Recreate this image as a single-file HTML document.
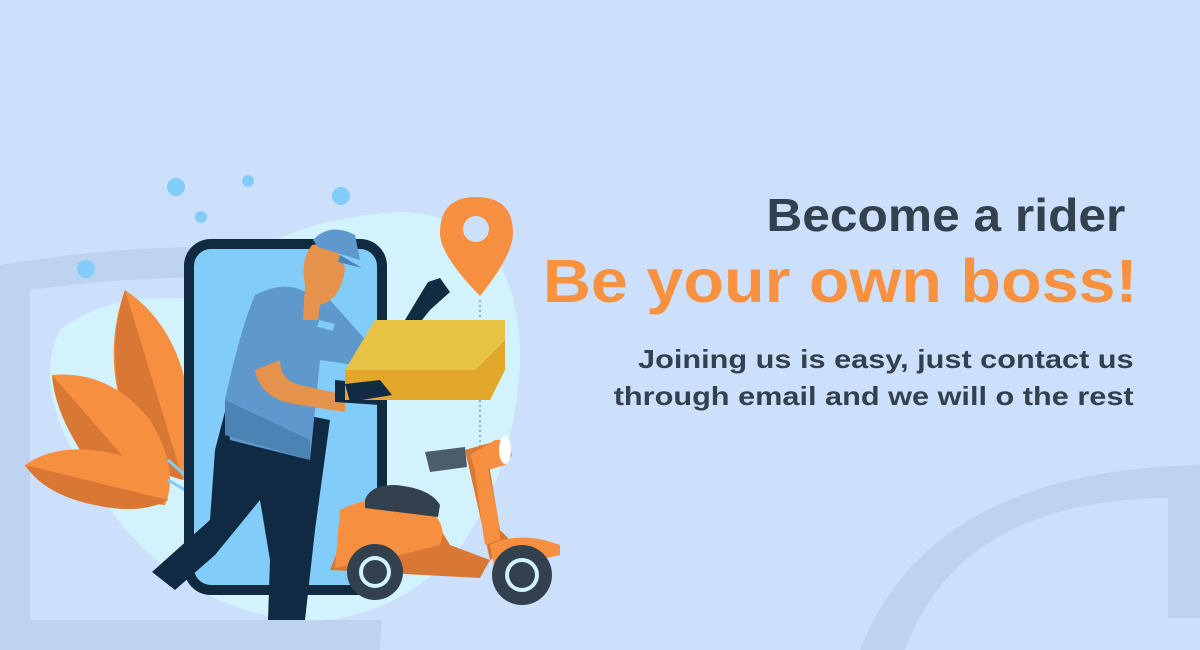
<!DOCTYPE html>
<html><head><meta charset="utf-8"><style>
html,body{margin:0;padding:0}
body{width:1200px;height:650px;background:#cce0fc;position:relative;overflow:hidden;font-family:"Liberation Sans",sans-serif}
svg{position:absolute;left:0;top:0}
.t{position:absolute;right:0;text-align:right;white-space:nowrap;font-weight:bold;transform-origin:right top}
</style></head><body>
<svg width="1200" height="650" viewBox="0 0 1200 650">
  <path d="M0 265 Q210 230 405 262 L380 650 L0 650Z" fill="#bed3ef"/>
  <path d="M30 290 Q210 265 382 290 L385 620 L30 620Z" fill="#cce0fc"/>
  <path d="M860 650 Q930 470 1200 465 L1200 650Z" fill="#bed3ef"/>
  <path d="M905 650 Q960 500 1168 498 L1168 618 L1200 618 L1200 650Z" fill="#cce0fc"/>
  <path d="M60 330 Q110 290 200 300 Q260 220 400 212 Q520 215 520 360 Q515 480 450 560 Q380 625 300 620 Q170 610 90 480 Q30 390 60 330Z" fill="#d2f3fe"/>
  <circle cx="176" cy="187" r="9" fill="#82ccfa"/><circle cx="201" cy="217" r="6" fill="#82ccfa"/>
  <circle cx="248" cy="181" r="6" fill="#82ccfa"/><circle cx="341" cy="196" r="9" fill="#82ccfa"/>
  <circle cx="86" cy="269" r="9" fill="#82ccfa"/>
  <path d="M125 290 Q170 320 185 380 L185 480 Q150 470 130 430 Q100 360 125 290Z" fill="#f78f40"/>
  <path d="M125 290 L183 480 Q140 470 125 420 Q105 350 125 290Z" fill="#d97734"/>
  <path d="M52 375 Q110 370 150 420 Q180 470 165 505 Q120 500 85 455 Q55 415 52 375Z" fill="#f78f40"/>
  <path d="M52 375 L165 505 Q110 500 80 450 Q55 410 52 375Z" fill="#d97734"/>
  <path d="M25 465 Q60 440 120 455 Q165 470 168 500 Q140 515 95 505 Q45 495 25 465Z" fill="#f78f40"/>
  <path d="M25 465 L168 500 Q140 515 95 505 Q45 495 25 465Z" fill="#d97734"/>
  <path d="M168 480 L185 490 M168 460 L185 475" stroke="#82ccfa" stroke-width="3"/>
  <rect x="189" y="244" width="193" height="346" rx="22" fill="#82ccfa" stroke="#102a40" stroke-width="10"/>
  <path d="M476 197 Q513 197 513 233 Q513 255 480 296 Q440 255 440 233 Q440 197 476 197Z" fill="#f78f40"/>
  <circle cx="476" cy="229" r="13" fill="#cce0fc"/>
  <line x1="480" y1="300" x2="480" y2="490" stroke="#6a9fd0" stroke-width="1.5" stroke-dasharray="2 3"/>
  <path d="M228 400 L330 420 L315 530 L305 620 L268 620 L270 560 L260 500 L215 555 L175 590 L152 572 L210 520 L215 450Z" fill="#0f2a42"/>
  <path d="M255 295 Q285 280 305 292 L330 300 L370 345 L355 365 L320 360 L310 460 L290 455 L230 440 L225 400 Q240 330 255 295Z" fill="#5f98cd"/>
  <path d="M225 400 L310 440 L310 460 L225 435Z" fill="#4a83b4"/>
  <rect x="318" y="322" width="16" height="7" fill="#82ccfa" transform="rotate(15 326 325)"/>
  <path d="M255 370 Q260 400 300 405 L345 412 L345 395 L300 385 Q280 380 280 360Z" fill="#e4924c"/>
  <path d="M335 380 L385 385 L380 405 L335 402Z" fill="#112b42"/>
  <path d="M312 245 Q340 240 345 270 Q340 300 320 305 L318 320 L303 320 L305 285 Q300 260 312 245Z" fill="#e4924c"/>
  <path d="M313 240 Q330 222 355 235 L360 260 L318 247Z" fill="#5f98cd"/>
  <path d="M340 255 L362 268 L338 262Z" fill="#4a83b4"/>
  <path d="M405 320 L420 295 L428 282 L440 278 L450 292 L430 310 L418 325Z" fill="#112b42"/>
  <path d="M345 370 L375 320 L505 320 L505 340 L475 370Z" fill="#e6c245"/>
  <path d="M345 370 L475 370 L505 340 L505 370 L490 400 L345 400Z" fill="#e2a62b"/>
  <path d="M345 384 L380 380 L392 395 L350 402Z" fill="#112b42"/>
  <path d="M425 452 L465 447 L467 467 L430 472Z" fill="#4b5c6a"/>
  <path d="M465 450 L500 440 L505 460 L490 470 L500 530 L515 545 L490 560 L450 545 L435 520 L380 510 L350 520 L330 570 L480 578 L490 560Z" fill="#d97734"/>
  <path d="M495 440 Q508 438 512 455 L505 465 L488 470 Q500 520 500 540 L485 545 Q478 500 475 470 L470 455Z" fill="#f78f40"/>
  <path d="M340 510 Q380 490 420 505 Q450 520 440 545 L400 555 L335 568Z" fill="#f78f40"/>
  <path d="M490 545 Q520 530 560 545 L560 555 L495 570Z" fill="#f78f40"/>
  <ellipse cx="505" cy="450" rx="6" ry="14" fill="#fff"/>
  <path d="M365 500 Q370 485 395 485 Q430 488 440 505 L438 517 L365 508Z" fill="#33414f"/>
  <circle cx="375" cy="572" r="28" fill="#33414f"/><circle cx="375" cy="572" r="16" fill="#d2f3fe"/><circle cx="375" cy="572" r="12" fill="#33414f"/>
  <circle cx="522" cy="575" r="30" fill="#33414f"/><circle cx="522" cy="575" r="17" fill="#d2f3fe"/><circle cx="522" cy="575" r="13" fill="#33414f"/>
</svg>
<div class="t" style="right:75px;top:188px;font-size:46px;color:#33414f;transform:scaleX(1.08)">Become a rider</div>
<div class="t" style="right:62px;top:246px;font-size:61px;color:#f89240;transform:scaleX(1.09)">Be your own boss!</div>
<div class="t" style="right:66px;top:341px;font-size:26px;line-height:37px;color:#33414f;transform:scaleX(1.18)">Joining us is easy, just contact us<br>through email and we will o the rest</div>
</body></html>
